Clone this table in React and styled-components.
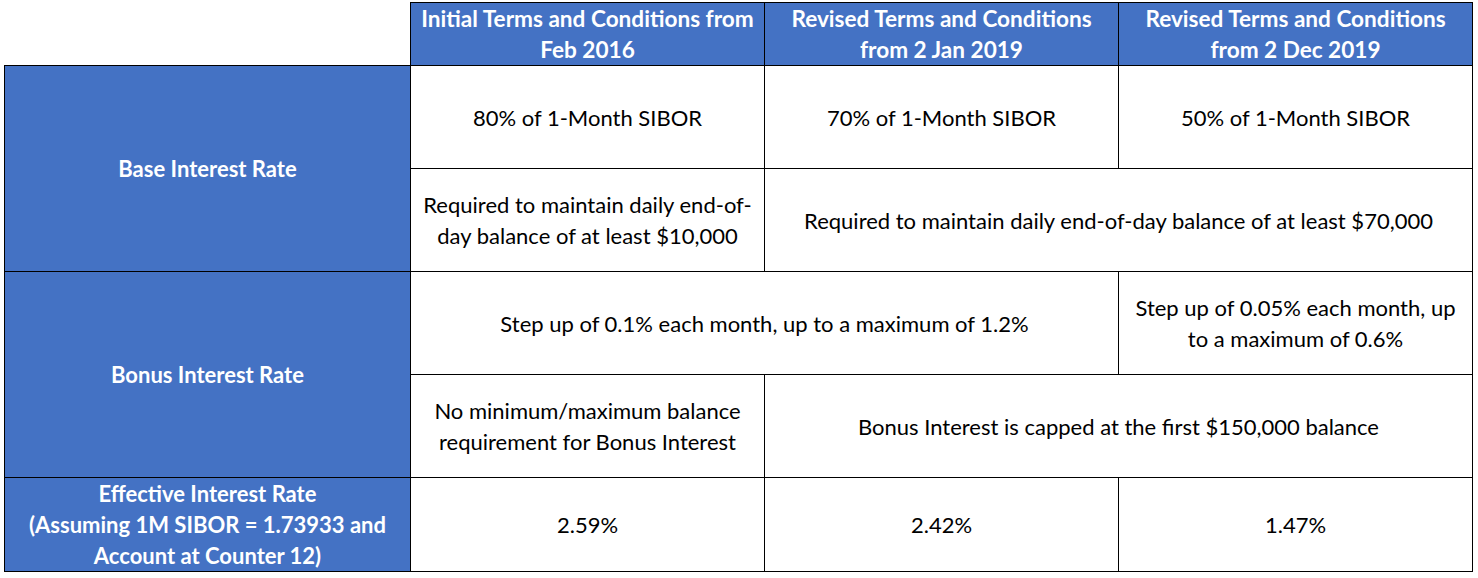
import React from "react";
import styled, { createGlobalStyle } from "styled-components";

const Global = createGlobalStyle`
  html, body { margin: 0; padding: 0; background: #ffffff; }
  body { font-family: Lato, "Open Sans", sans-serif; }
`;

const Wrap = styled.div`
  padding: 2px 0 0 4px;
`;

const Table = styled.table`
  border-collapse: collapse;
  table-layout: fixed;
  width: 1468px;
  font-family: Lato, "Noto Sans", sans-serif;
  font-size: 22px;
  line-height: 31px;
`;

const Col = styled.col`
  width: ${(p) => p.$w}px;
`;

const Row = styled.tr`
  height: ${(p) => p.$h}px;
`;

const Blank = styled.td`
  border: none;
  padding: 0;
`;

const HeadCell = styled.th`
  background: #4472c4;
  color: #ffffff;
  font-weight: 700;
  font-size: 22.6px;
  border: 1px solid #000;
  text-align: center;
  vertical-align: middle;
  padding: 0 4px;
  white-space: nowrap;
`;

const LabelCell = styled.th`
  background: #4472c4;
  color: #ffffff;
  font-weight: 700;
  font-size: 22px;
  border: 1px solid #000;
  text-align: center;
  vertical-align: middle;
  padding: 0 4px;
  white-space: nowrap;
`;

const DataCell = styled.td`
  background: #ffffff;
  color: #000000;
  font-weight: 400;
  border: 1px solid #000;
  text-align: center;
  vertical-align: middle;
  padding: 0 4px;
  white-space: nowrap;
`;

export default function App() {
  return (
    <>
      <Global />
      <Wrap>
        <Table>
          <colgroup>
            <Col $w={406} />
            <Col $w={354} />
            <Col $w={354} />
            <Col $w={354} />
          </colgroup>
          <tbody>
            <Row $h={61}>
              <Blank />
              <HeadCell>Initial Terms and Conditions from<br />Feb 2016</HeadCell>
              <HeadCell>Revised Terms and Conditions<br />from 2 Jan 2019</HeadCell>
              <HeadCell>Revised Terms and Conditions<br />from 2 Dec 2019</HeadCell>
            </Row>
            <Row $h={103}>
              <LabelCell rowSpan={2}>Base Interest Rate</LabelCell>
              <DataCell>80% of 1-Month SIBOR</DataCell>
              <DataCell>70% of 1-Month SIBOR</DataCell>
              <DataCell>50% of 1-Month SIBOR</DataCell>
            </Row>
            <Row $h={103}>
              <DataCell>Required to maintain daily end-of-<br />day balance of at least $10,000</DataCell>
              <DataCell colSpan={2}>Required to maintain daily end-of-day balance of at least $70,000</DataCell>
            </Row>
            <Row $h={103}>
              <LabelCell rowSpan={2}>Bonus Interest Rate</LabelCell>
              <DataCell colSpan={2}>Step up of 0.1% each month, up to a maximum of 1.2%</DataCell>
              <DataCell>Step up of 0.05% each month, up<br />to a maximum of 0.6%</DataCell>
            </Row>
            <Row $h={103}>
              <DataCell>No minimum/maximum balance<br />requirement for Bonus Interest</DataCell>
              <DataCell colSpan={2}>Bonus Interest is capped at the first $150,000 balance</DataCell>
            </Row>
            <Row $h={94}>
              <LabelCell>Effective Interest Rate<br />(Assuming 1M SIBOR = 1.73933 and<br />Account at Counter 12)</LabelCell>
              <DataCell>2.59%</DataCell>
              <DataCell>2.42%</DataCell>
              <DataCell>1.47%</DataCell>
            </Row>
          </tbody>
        </Table>
      </Wrap>
    </>
  );
}
